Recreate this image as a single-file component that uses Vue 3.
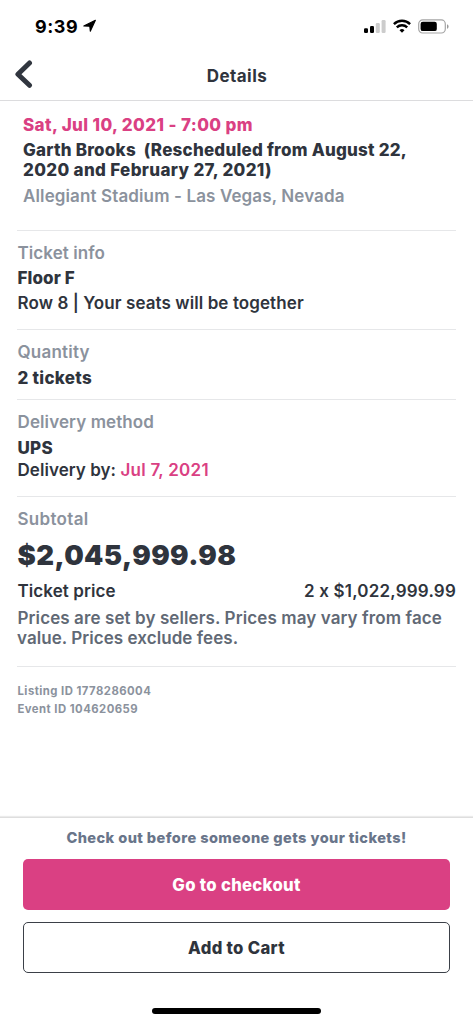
<script setup>
const eventId = '104620659'
const listingId = '1778286004'
</script>

<template>
  <div class="screen">
    <div class="status">
      <span class="time">9:39</span>
      <svg class="loc" width="14" height="14" viewBox="0 0 14 14"><path d="M12.4 1.2 7.3 12.3 6.8 7.3.8 7Z" fill="#000" stroke="#000" stroke-width="1.1" stroke-linejoin="round" /></svg>
      <svg class="signal" width="22" height="15" viewBox="0 0 22 15">
        <rect x="0" y="9.2" width="4" height="4.8" rx="1.2" fill="#000" />
        <rect x="6" y="7" width="4" height="7" rx="1.2" fill="#000" />
        <rect x="11.8" y="4" width="4" height="10" rx="1.2" fill="#ccc" />
        <rect x="17.6" y="1" width="4" height="13" rx="1.2" fill="#ccc" />
      </svg>
      <svg class="wifi" width="18" height="14" viewBox="0 0 18 14" fill="none" stroke="#000" stroke-width="2.4">
        <path d="M.9 5.1a11.6 11.6 0 0 1 16.2 0" />
        <path d="M3.8 8.4a7.4 7.4 0 0 1 10.4 0" />
        <path d="M9 13.8 6.5 11.2a3.6 3.6 0 0 1 5 0Z" fill="#000" stroke="none" />
      </svg>
      <svg class="battery" width="31" height="15" viewBox="0 0 31 15">
        <rect x=".7" y=".9" width="26.6" height="13.1" rx="4" fill="none" stroke="#a5a5a5" stroke-width="1.2" />
        <rect x="2.6" y="2.8" width="16.2" height="9.3" rx="2.2" fill="#000" />
        <path d="M29 5.2v4.6c1-.4 1.6-1.3 1.6-2.3S30 5.6 29 5.2Z" fill="#999" />
      </svg>
    </div>

    <header class="nav">
      <svg class="back" width="20" height="32" viewBox="0 0 20 32"><path d="M14.5 5 2.9 16.2 14.5 27.3" fill="none" stroke="#31363f" stroke-width="5" stroke-linecap="round" stroke-linejoin="round" /></svg>
      <h1>Details</h1>
    </header>

    <main>
      <section class="event">
        <p class="date">Sat, Jul 10, 2021 - 7:00 pm</p>
        <p class="title"><span class="t1">Garth Brooks&nbsp; (Rescheduled from August 22,</span><br><span class="t2">2020 and February 27, 2021)</span></p>
        <p class="venue">Allegiant Stadium - Las Vegas, Nevada</p>
      </section>
      <section class="info">
        <p class="label l-info">Ticket info</p>
        <p class="strong floor">Floor F</p>
        <p class="body row">Row 8 | Your seats will be together</p>
      </section>
      <section class="qty">
        <p class="label l-qty">Quantity</p>
        <p class="strong count">2 tickets</p>
      </section>
      <section class="delivery">
        <p class="label l-del">Delivery method</p>
        <p class="strong ups">UPS</p>
        <p class="body by">Delivery by: <span class="pink">Jul 7, 2021</span></p>
      </section>
      <section class="subtotal">
        <p class="label l-sub">Subtotal</p>
        <p class="total">$2,045,999.98</p>
        <div class="price body"><span class="tp">Ticket price</span><span class="amt">2 x $1,022,999.99</span></div>
        <p class="note"><span class="n1">Prices are set by sellers. Prices may vary from face</span><br><span class="n2">value. Prices exclude fees.</span></p>
      </section>
      <section class="ids">
        <p class="lid">Listing ID {{ listingId }}</p>
        <p class="eid">Event ID {{ eventId }}</p>
      </section>
    </main>

    <footer>
      <p class="hint">Check out before someone gets your tickets!</p>
      <button class="btn primary"><span>Go to checkout</span></button>
      <button class="btn outline"><span>Add to Cart</span></button>
      <div class="home"></div>
    </footer>
  </div>
</template>

<style>
body { margin: 0; background: #fff; }
</style>

<style scoped>
.screen { width: 473px; height: 1023px; box-sizing: border-box; display: flex; flex-direction: column; overflow: hidden; background: #fff; color: #2f343d; font-family: Inter, "Liberation Sans", sans-serif; font-size: 17px; white-space: nowrap; }
p, h1 { margin: 0; }
.status { height: 52px; flex: none; box-sizing: border-box; padding: 0 24px 0 35px; display: flex; align-items: center; color: #000; }
.time { font-size: 18px; font-weight: 700; width: 48px; letter-spacing: .55px; }
.loc { margin-top: -1px; }
.signal { margin-left: auto; }
.wifi { margin-left: 7px; margin-top: -1px; }
.battery { margin-left: 7px; }
.nav { height: 49px; flex: none; box-sizing: border-box; border-bottom: 1px solid #dcdcde; display: grid; grid-template-columns: 61px 1fr 60px; align-items: center; }
.back { margin: -5px 0 0 15px; }
h1 { text-align: center; font-size: 17px; font-weight: 700; line-height: 20px; letter-spacing: .42px; }
main { flex: 1; padding: 0 17px; }
section { box-sizing: border-box; border-bottom: 1px solid #e6e7e9; }
section p, .price { line-height: 20px; text-indent: .5px; }
.event { height: 130px; padding: 14px 6px 0; }
.date { color: #da4083; font-weight: 800; letter-spacing: .39px; text-indent: 0; }
.title { font-weight: 800; margin-top: 5px; text-indent: 0; }
.t1 { letter-spacing: .22px; }
.t2 { letter-spacing: .33px; }
.venue { color: #8b929d; font-weight: 600; margin-top: 6px; letter-spacing: .12px; text-indent: 0; }
.info { height: 99px; padding-top: 12px; }
.label { color: #8b929d; font-weight: 600; }
.strong { font-weight: 800; }
.body { font-weight: 600; }
.l-info { letter-spacing: .08px; }
.floor { letter-spacing: .08px; }
.row { letter-spacing: .09px; }
.floor, .row { margin-top: 5px; }
.qty { height: 70px; padding-top: 12px; }
.l-qty { letter-spacing: .22px; }
.count { margin-top: 6px; letter-spacing: .27px; }
.delivery { height: 97px; padding-top: 12px; }
.l-del { letter-spacing: .1px; }
.ups { margin-top: 6px; letter-spacing: .25px; }
.by { margin-top: 2px; letter-spacing: .05px; }
.pink { color: #da4083; letter-spacing: .26px; }
.subtotal { height: 170px; padding-top: 12px; }
.l-sub { letter-spacing: .3px; }
.total { font-size: 27.5px; font-weight: 900; margin-top: 16px; letter-spacing: .4px; }
.price { display: flex; justify-content: space-between; margin-top: 16px; }
.tp { letter-spacing: .08px; }
.amt { letter-spacing: .19px; }
.note { color: #616975; font-weight: 600; margin-top: 7px; }
.n1 { letter-spacing: .1px; }
.n2 { letter-spacing: .06px; }
.ids { border: 0; padding-top: 15px; color: #8b929d; font-size: 11.3px; font-weight: 700; }
.ids p { line-height: 18px; letter-spacing: .47px; }
footer { height: 206px; flex: none; box-sizing: border-box; padding: 10px 23px 0; border-top: 1px solid #dedede; box-shadow: 0 -1px 1px rgba(0, 0, 0, .08); display: flex; flex-direction: column; }
.hint { text-align: center; color: #69758a; font-size: 14.6px; font-weight: 800; line-height: 20px; margin-bottom: 11px; letter-spacing: .4px; }
.btn { flex: none; height: 51px; box-sizing: border-box; border-radius: 5px; padding: 0; font: 800 16.7px/20px Inter, "Liberation Sans", sans-serif; letter-spacing: .31px; }
.primary { background: #da4083; color: #fff; border: 0; }
.outline { margin-top: 12px; background: #fff; color: #2f343d; border: 1px solid #3b4048; }
.home { width: 169px; height: 5.5px; border-radius: 3px; background: #000; margin: 35px auto 0; }
</style>
